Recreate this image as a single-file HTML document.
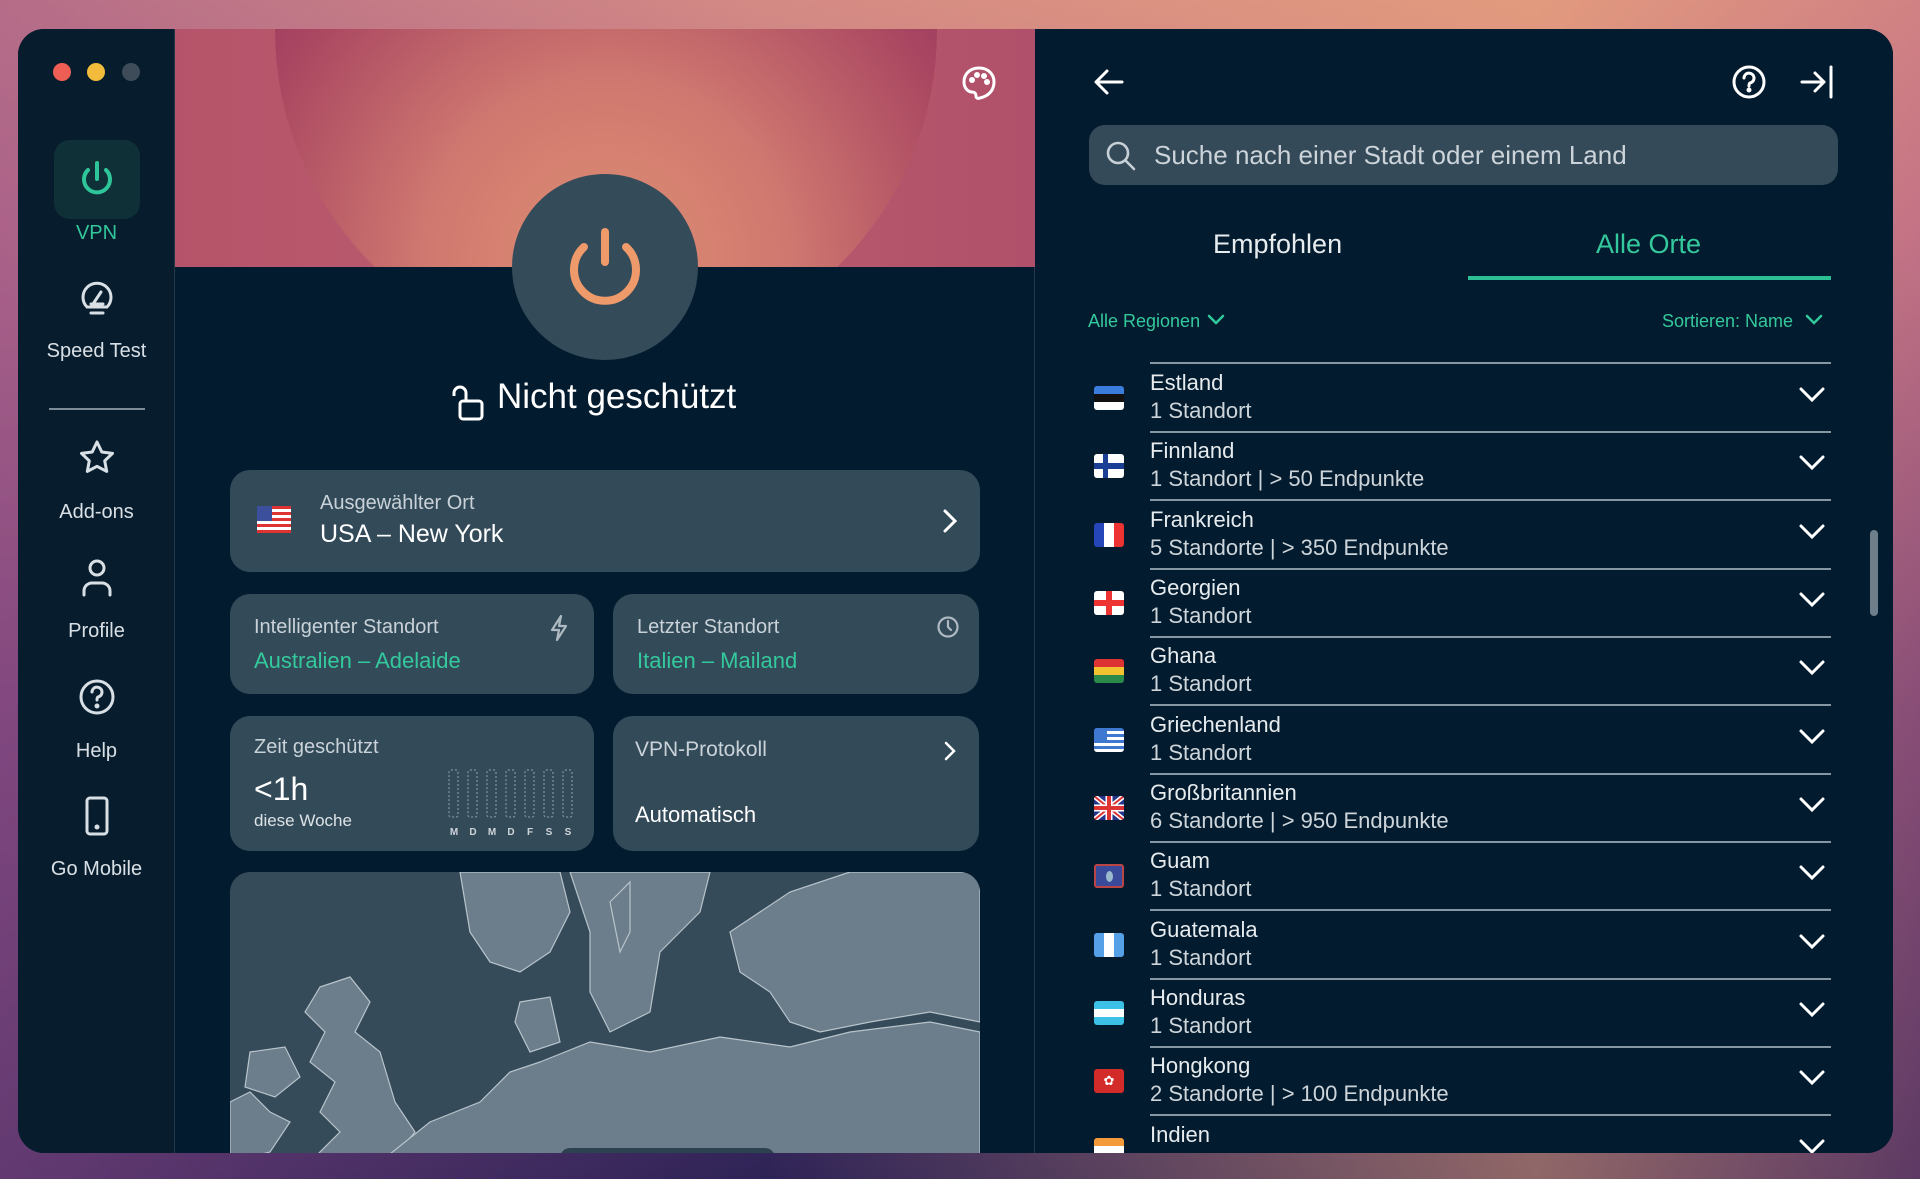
<!DOCTYPE html>
<html><head><meta charset="utf-8"><style>
*{margin:0;padding:0;box-sizing:border-box}
body{width:1920px;height:1179px;overflow:hidden;position:relative;font-family:"Liberation Sans",sans-serif;
background:linear-gradient(180deg,#d48a84 0%,#c07486 20%,#6d3f72 60%,#2e2356 100%);}
.bgtop{position:absolute;left:0;top:0;width:1920px;height:1179px;background:linear-gradient(90deg,rgba(150,80,140,.5) 0%,rgba(0,0,0,0) 40%,rgba(240,170,120,.5) 80%,rgba(200,110,130,.3) 100%)}
.win{position:absolute;left:18px;top:29px;width:1875px;height:1124px;border-radius:26px;overflow:hidden;background:#031b2e}
.side{position:absolute;left:0;top:0;width:157px;height:1124px;background:#071d2e;border-right:1px solid #21384a}
.dot{position:absolute;top:34px;width:18px;height:18px;border-radius:50%}
.ab{position:absolute;color:#d9e0e5;font-size:20px;text-align:center;width:157px;left:0}
.ic{position:absolute;left:0;width:157px;display:flex;justify-content:center}
.mid{position:absolute;left:157px;top:0;width:860px;height:1124px;background:#031b2e;border-right:1px solid #21384a}
.hero{position:absolute;left:0;top:0;width:860px;height:238px;overflow:hidden;background:linear-gradient(90deg,#b5536a,#bd5f6e 50%,#b0506a)}
.sun{position:absolute;left:100px;top:-330px;width:662px;height:662px;border-radius:50%;background:radial-gradient(circle at 50% 85%,#df8e72 0%,#cf7870 28%,#ac4a62 55%,#963360 72%)}
.card{position:absolute;background:#334a59;border-radius:20px;color:#e4e9ec}
.small{font-size:20px;color:#c9d2d8}
.green{color:#34c99c}
.right{position:absolute;left:1017px;top:0;width:858px;height:1124px;background:#031b2e}
.row{position:absolute;left:0;width:858px;height:68px}
.row .n{position:absolute;left:115px;top:6px;font-size:22px;color:#e6ebee}
.row .s{position:absolute;left:115px;top:34px;font-size:22px;color:#cdd5da}
.row .l{position:absolute;left:115px;top:67px;width:681px;height:2px;background:#8597a3}
.row .f{position:absolute;left:59px;top:22px;width:30px;height:24px;border-radius:3px;overflow:hidden}
.row svg.c{position:absolute;left:763px;top:22px}
</style></head><body>
<div class="bgtop"></div>
<div class="win">
 <div class="side">
  <div class="dot" style="left:35px;background:#ee5e55"></div>
  <div class="dot" style="left:69px;background:#f2bb3b"></div>
  <div class="dot" style="left:104px;background:#3d4c58"></div>
  <div style="position:absolute;left:36px;top:111px;width:86px;height:79px;border-radius:16px;background:#0f3037"></div>
  <div class="ic" style="top:128px"><svg width="44" height="44" viewBox="0 0 44 44" fill="none" stroke="#2fc59a" stroke-width="4" stroke-linecap="round"><path d="M22 6v16"/><path d="M13 13a13 13 0 1 0 18 0"/></svg></div>
  <div class="ab" style="top:193px;color:#31c79b">VPN</div>
  <div class="ic" style="top:249px"><svg width="40" height="40" viewBox="0 0 40 40" fill="none" stroke="#d9e0e5" stroke-width="3" stroke-linecap="round"><path d="M10 29a14 14 0 1 1 20 0z"/><path d="M14 35h12"/><path d="M16 26l8-12"/><path d="M14 26h12"/></svg></div>
  <div class="ab" style="top:311px">Speed Test</div>
  <div style="position:absolute;left:31px;top:379px;width:96px;height:2px;background:#7b8c98"></div>
  <div class="ic" style="top:409px"><svg width="40" height="40" viewBox="0 0 40 40" fill="none" stroke="#d9e0e5" stroke-width="3" stroke-linejoin="round"><path d="M20 4l4.8 10 10.7 1.4-7.8 7.4 2 10.6L20 28.3 10.3 33.4l2-10.6-7.8-7.4L15.2 14z"/></svg></div>
  <div class="ab" style="top:472px">Add-ons</div>
  <div class="ic" style="top:528px"><svg width="40" height="42" viewBox="0 0 40 42" fill="none" stroke="#d9e0e5" stroke-width="3" stroke-linecap="round"><circle cx="20" cy="11" r="7"/><path d="M7 38v-4a8 8 0 0 1 8-8h10a8 8 0 0 1 8 8v4"/></svg></div>
  <div class="ab" style="top:591px">Profile</div>
  <div class="ic" style="top:648px"><svg width="40" height="40" viewBox="0 0 40 40" fill="none" stroke="#d9e0e5" stroke-width="3" stroke-linecap="round"><circle cx="20" cy="20" r="16"/><path d="M15 15a5 5 0 1 1 6 5c-1 .5-1 1.5-1 3"/><circle cx="20" cy="29" r="1" fill="#d9e0e5"/></svg></div>
  <div class="ab" style="top:711px">Help</div>
  <div class="ic" style="top:766px"><svg width="30" height="42" viewBox="0 0 30 42" fill="none" stroke="#d9e0e5" stroke-width="3"><rect x="5" y="3" width="20" height="36" rx="3"/><circle cx="15" cy="32" r="1" fill="#d9e0e5"/></svg></div>
  <div class="ab" style="top:829px">Go Mobile</div>
 </div>
 <div class="mid">
  <div class="hero"><div class="sun"></div></div>
  <svg style="position:absolute;left:785px;top:35px" width="38" height="38" viewBox="0 0 38 38" fill="none" stroke="#fff" stroke-width="3"><path d="M19 4C10 4 4 10 4 18c0 6 4 10 8 10 3 0 4 2 4 4 0 2 2 3 4 2 9-2 14-8 14-16C34 10 28 4 19 4z"/><circle cx="12" cy="16" r="1.5" fill="#fff"/><circle cx="17" cy="11" r="1.5" fill="#fff"/><circle cx="24" cy="12" r="1.5" fill="#fff"/><circle cx="27" cy="18" r="1.5" fill="#fff"/></svg>
  <div style="position:absolute;left:337px;top:145px;width:186px;height:186px;border-radius:50%;background:#344b59"></div>
  <svg style="position:absolute;left:380px;top:188px" width="100" height="100" viewBox="0 0 100 100" fill="none" stroke="#ef9a6b" stroke-width="8" stroke-linecap="round"><path d="M50 15v30"/><path d="M29 30a31 31 0 1 0 42 0"/></svg>
  <svg style="position:absolute;left:275px;top:355px" width="36" height="40" viewBox="0 0 36 40" fill="none" stroke="#fff" stroke-width="3" stroke-linejoin="round"><path d="M4 12V9a6 6 0 0 1 12 0v7"/><rect x="10" y="17" width="22" height="18" rx="3"/></svg>
  <div style="position:absolute;left:322px;top:348px;font-size:35px;color:#fff">Nicht geschützt</div>
  <div class="card" style="left:55px;top:441px;width:750px;height:102px">
   <svg style="position:absolute;left:27px;top:36px" width="34" height="27" viewBox="0 0 34 27"><rect width="34" height="27" rx="3" fill="#fff"/><g fill="#d33"><rect y="0" width="34" height="3"/><rect y="6" width="34" height="3"/><rect y="12" width="34" height="3"/><rect y="18" width="34" height="3"/><rect y="24" width="34" height="3"/></g><rect width="15" height="15" fill="#3b4f9c"/></svg>
   <div class="small" style="position:absolute;left:90px;top:22px">Ausgewählter Ort</div>
   <div style="position:absolute;left:90px;top:50px;font-size:25px;color:#fff">USA – New York</div>
   <svg style="position:absolute;left:712px;top:38px" width="16" height="26" viewBox="0 0 16 26" fill="none" stroke="#fff" stroke-width="3" stroke-linecap="round"><path d="M3 3l10 10-10 10"/></svg>
  </div>
  <div class="card" style="left:55px;top:565px;width:364px;height:100px">
   <div class="small" style="position:absolute;left:24px;top:22px">Intelligenter Standort</div>
   <div class="green" style="position:absolute;left:24px;top:54px;font-size:22px">Australien – Adelaide</div>
   <svg style="position:absolute;left:318px;top:20px" width="22" height="28" viewBox="0 0 22 28" fill="none" stroke="#aeb9c1" stroke-width="2.2" stroke-linejoin="round"><path d="M13 2L4 16h7l-2 10 9-14h-7z"/></svg>
  </div>
  <div class="card" style="left:438px;top:565px;width:366px;height:100px">
   <div class="small" style="position:absolute;left:24px;top:22px">Letzter Standort</div>
   <div class="green" style="position:absolute;left:24px;top:54px;font-size:22px">Italien – Mailand</div>
   <svg style="position:absolute;left:323px;top:21px" width="24" height="24" viewBox="0 0 24 24" fill="none" stroke="#aeb9c1" stroke-width="2.2" stroke-linecap="round"><circle cx="12" cy="12" r="9.5"/><path d="M12 6v6l3 3"/></svg>
  </div>
  <div class="card" style="left:55px;top:687px;width:364px;height:135px">
   <div class="small" style="position:absolute;left:24px;top:20px">Zeit geschützt</div>
   <div style="position:absolute;left:24px;top:55px;font-size:32px;color:#fff">&lt;1h</div>
   <div style="position:absolute;left:24px;top:95px;font-size:17px;color:#dde3e7">diese Woche</div>
   <svg style="position:absolute;left:218px;top:53px" width="126" height="80" viewBox="0 0 126 80"><g fill="none" stroke="#7e8f9b" stroke-width="1.3" stroke-dasharray="2 2"><rect x="1" y="1" width="9" height="47" rx="2"/><rect x="20" y="1" width="9" height="47" rx="2"/><rect x="39" y="1" width="9" height="47" rx="2"/><rect x="58" y="1" width="9" height="47" rx="2"/><rect x="77" y="1" width="9" height="47" rx="2"/><rect x="96" y="1" width="9" height="47" rx="2"/><rect x="115" y="1" width="9" height="47" rx="2"/></g><g fill="#cfd6db" font-size="10" font-family="Liberation Sans" font-weight="bold" text-anchor="middle"><text x="6" y="66">M</text><text x="25" y="66">D</text><text x="44" y="66">M</text><text x="63" y="66">D</text><text x="82" y="66">F</text><text x="101" y="66">S</text><text x="120" y="66">S</text></g></svg>
  </div>
  <div class="card" style="left:438px;top:687px;width:366px;height:135px">
   <div class="small" style="position:absolute;left:22px;top:22px;font-size:21px">VPN-Protokoll</div>
   <div style="position:absolute;left:22px;top:86px;font-size:22px;color:#fff">Automatisch</div>
   <svg style="position:absolute;left:330px;top:24px" width="14" height="22" viewBox="0 0 14 22" fill="none" stroke="#fff" stroke-width="2.5" stroke-linecap="round"><path d="M3 3l8 8-8 8"/></svg>
  </div>
  <div style="position:absolute;left:55px;top:843px;width:750px;height:290px;border-radius:20px 20px 0 0;overflow:hidden;background:#354b5a">
   <svg width="750" height="290" viewBox="0 0 750 290" fill="#6c7e8b" stroke="#b9c4cb" stroke-width="1.2">
    <path d="M0 230 L20 220 40 240 60 250 40 280 0 290z"/>
    <path d="M90 115 L120 105 140 130 125 160 150 180 165 230 185 260 160 290 80 290 110 260 90 240 105 210 80 190 95 160 75 140z"/>
    <path d="M20 180 L55 175 70 205 45 225 15 215z"/>
    <path d="M230 0 L330 0 340 40 320 80 290 100 260 90 240 60z"/>
    <path d="M340 0 L480 0 470 40 430 80 420 140 380 160 360 120 360 60z"/>
    <path d="M290 130 L320 125 330 170 300 180 285 150z"/>
    <path d="M310 190 L360 170 420 180 490 165 560 175 620 160 700 150 750 160 750 290 150 290 200 250 250 230 280 200z"/>
    <path d="M500 60 L560 20 620 0 750 0 750 150 700 140 640 150 590 160 560 150 540 120 510 100z"/>
    <path d="M380 30 L400 10 400 60 390 80z"/>
   </svg>
   <div style="position:absolute;left:330px;top:276px;width:215px;height:20px;border-radius:10px;background:#2c4250"></div>
  </div>
 </div>
 <div class="right">
  <svg style="position:absolute;left:57px;top:36px" width="34" height="34" viewBox="0 0 34 34" fill="none" stroke="#fff" stroke-width="3" stroke-linecap="round" stroke-linejoin="round"><path d="M30 17H5M15 6L4 17l11 11"/></svg>
  <svg style="position:absolute;left:696px;top:35px" width="36" height="36" viewBox="0 0 36 36" fill="none" stroke="#fff" stroke-width="3" stroke-linecap="round"><circle cx="18" cy="18" r="15"/><path d="M13 14a5 5 0 1 1 6 5c-1 .5-1 1.5-1 3"/><circle cx="18" cy="26" r="1" fill="#fff"/></svg>
  <svg style="position:absolute;left:764px;top:34px" width="36" height="38" viewBox="0 0 36 38" fill="none" stroke="#fff" stroke-width="3" stroke-linecap="round" stroke-linejoin="round"><path d="M3 19h22M16 10l9 9-9 9M32 4v30"/></svg>
  <div style="position:absolute;left:54px;top:96px;width:749px;height:60px;border-radius:16px;background:#344a59"></div>
  <svg style="position:absolute;left:70px;top:111px" width="32" height="32" viewBox="0 0 32 32" fill="none" stroke="#c7d0d6" stroke-width="2.6" stroke-linecap="round"><circle cx="13" cy="13" r="10"/><path d="M21 21l8 8"/></svg>
  <div style="position:absolute;left:119px;top:111px;font-size:26px;color:#ccd4da">Suche nach einer Stadt oder einem Land</div>
  <div style="position:absolute;left:178px;top:200px;font-size:27px;color:#e7ecef">Empfohlen</div>
  <div style="position:absolute;left:561px;top:200px;font-size:27px;color:#34c99c">Alle Orte</div>
  <div style="position:absolute;left:433px;top:247px;width:363px;height:4px;background:#2cbf93"></div>
  <div style="position:absolute;left:53px;top:282px;font-size:18px;color:#34c99c">Alle Regionen</div>
  <svg style="position:absolute;left:171px;top:284px" width="20" height="14" viewBox="0 0 20 14" fill="none" stroke="#34c99c" stroke-width="2.5" stroke-linecap="round"><path d="M3 3l7 7 7-7"/></svg>
  <div style="position:absolute;left:627px;top:282px;font-size:18px;color:#34c99c">Sortieren: Name</div>
  <svg style="position:absolute;left:769px;top:284px" width="20" height="14" viewBox="0 0 20 14" fill="none" stroke="#34c99c" stroke-width="2.5" stroke-linecap="round"><path d="M3 3l7 7 7-7"/></svg>
  <div style="position:absolute;left:0;top:315px;width:858px;height:809px;overflow:hidden">
   <div style="position:absolute;left:115px;top:-20px;font-size:22px;color:#cdd5da">1 Standort</div>
   <div style="position:absolute;left:115px;top:18px;width:681px;height:2px;background:#8597a3"></div>
   <div class="row" style="top:20px"><div class="f" style="background:linear-gradient(#3b7ddd 33%,#111 33% 66%,#fff 66%)"></div><div class="n">Estland</div><div class="s">1 Standort</div><div class="l"></div><svg class="c" width="28" height="18" viewBox="0 0 28 18" fill="none" stroke="#fff" stroke-width="3" stroke-linecap="round"><path d="M3 3l11 11 11-11"/></svg></div>
   <div class="row" style="top:88px"><div class="f" style="background:#fff"><div style="position:absolute;left:9px;top:0;width:5px;height:24px;background:#1b3f94"></div><div style="position:absolute;left:0;top:9px;width:30px;height:6px;background:#1b3f94"></div></div><div class="n">Finnland</div><div class="s">1 Standort | &gt; 50 Endpunkte</div><div class="l"></div><svg class="c" width="28" height="18" viewBox="0 0 28 18" fill="none" stroke="#fff" stroke-width="3" stroke-linecap="round"><path d="M3 3l11 11 11-11"/></svg></div>
   <div class="row" style="top:157px"><div class="f" style="background:linear-gradient(90deg,#2546b8 33%,#fff 33% 66%,#e33 66%)"></div><div class="n">Frankreich</div><div class="s">5 Standorte | &gt; 350 Endpunkte</div><div class="l"></div><svg class="c" width="28" height="18" viewBox="0 0 28 18" fill="none" stroke="#fff" stroke-width="3" stroke-linecap="round"><path d="M3 3l11 11 11-11"/></svg></div>
   <div class="row" style="top:225px"><div class="f" style="background:#fff"><div style="position:absolute;left:12px;top:0;width:6px;height:24px;background:#e33"></div><div style="position:absolute;left:0;top:9px;width:30px;height:6px;background:#e33"></div></div><div class="n">Georgien</div><div class="s">1 Standort</div><div class="l"></div><svg class="c" width="28" height="18" viewBox="0 0 28 18" fill="none" stroke="#fff" stroke-width="3" stroke-linecap="round"><path d="M3 3l11 11 11-11"/></svg></div>
   <div class="row" style="top:293px"><div class="f" style="background:linear-gradient(#d33 33%,#f2c230 33% 66%,#2a8a4a 66%)"></div><div class="n">Ghana</div><div class="s">1 Standort</div><div class="l"></div><svg class="c" width="28" height="18" viewBox="0 0 28 18" fill="none" stroke="#fff" stroke-width="3" stroke-linecap="round"><path d="M3 3l11 11 11-11"/></svg></div>
   <div class="row" style="top:362px"><div class="f" style="background:repeating-linear-gradient(#3e78d0 0 3px,#fff 3px 6px)"><div style="position:absolute;left:0;top:0;width:13px;height:12px;background:#3e78d0"></div></div><div class="n">Griechenland</div><div class="s">1 Standort</div><div class="l"></div><svg class="c" width="28" height="18" viewBox="0 0 28 18" fill="none" stroke="#fff" stroke-width="3" stroke-linecap="round"><path d="M3 3l11 11 11-11"/></svg></div>
   <div class="row" style="top:430px"><svg class="f" viewBox="0 0 30 24" style="border-radius:3px"><rect width="30" height="24" fill="#24348a"/><path d="M0 0L30 24M30 0L0 24" stroke="#fff" stroke-width="5"/><path d="M0 0L30 24M30 0L0 24" stroke="#d33" stroke-width="2"/><path d="M15 0v24M0 12h30" stroke="#fff" stroke-width="7"/><path d="M15 0v24M0 12h30" stroke="#d33" stroke-width="4"/></svg><div class="n">Großbritannien</div><div class="s">6 Standorte | &gt; 950 Endpunkte</div><div class="l"></div><svg class="c" width="28" height="18" viewBox="0 0 28 18" fill="none" stroke="#fff" stroke-width="3" stroke-linecap="round"><path d="M3 3l11 11 11-11"/></svg></div>
   <div class="row" style="top:498px"><div class="f" style="background:#3a4a9a;border:2px solid #b44"><div style="position:absolute;left:10px;top:5px;width:7px;height:11px;border-radius:50%;background:#9bc"></div></div><div class="n">Guam</div><div class="s">1 Standort</div><div class="l"></div><svg class="c" width="28" height="18" viewBox="0 0 28 18" fill="none" stroke="#fff" stroke-width="3" stroke-linecap="round"><path d="M3 3l11 11 11-11"/></svg></div>
   <div class="row" style="top:567px"><div class="f" style="background:linear-gradient(90deg,#55a0e6 33%,#fff 33% 66%,#55a0e6 66%)"></div><div class="n">Guatemala</div><div class="s">1 Standort</div><div class="l"></div><svg class="c" width="28" height="18" viewBox="0 0 28 18" fill="none" stroke="#fff" stroke-width="3" stroke-linecap="round"><path d="M3 3l11 11 11-11"/></svg></div>
   <div class="row" style="top:635px"><div class="f" style="background:linear-gradient(#3cc0e6 33%,#fff 33% 66%,#3cc0e6 66%)"></div><div class="n">Honduras</div><div class="s">1 Standort</div><div class="l"></div><svg class="c" width="28" height="18" viewBox="0 0 28 18" fill="none" stroke="#fff" stroke-width="3" stroke-linecap="round"><path d="M3 3l11 11 11-11"/></svg></div>
   <div class="row" style="top:703px"><div class="f" style="background:#d32a2a;color:#fff;font-size:13px;text-align:center;line-height:24px">✿</div><div class="n">Hongkong</div><div class="s">2 Standorte | &gt; 100 Endpunkte</div><div class="l"></div><svg class="c" width="28" height="18" viewBox="0 0 28 18" fill="none" stroke="#fff" stroke-width="3" stroke-linecap="round"><path d="M3 3l11 11 11-11"/></svg></div>
   <div class="row" style="top:772px"><div class="f" style="background:linear-gradient(#f59a3a 33%,#fff 33% 66%,#2a8a4a 66%)"></div><div class="n">Indien</div><div class="s">1 Standort</div><svg class="c" width="28" height="18" viewBox="0 0 28 18" fill="none" stroke="#fff" stroke-width="3" stroke-linecap="round"><path d="M3 3l11 11 11-11"/></svg></div>
  </div>
  <div style="position:absolute;left:835px;top:501px;width:8px;height:86px;border-radius:4px;background:#6e7f8b"></div>
 </div>
</div>
</body></html>
